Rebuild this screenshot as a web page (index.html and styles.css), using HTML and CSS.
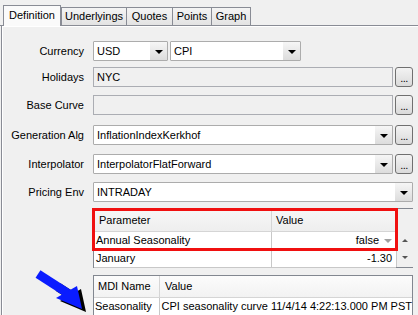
FILE: index.html
```html
<!DOCTYPE html>
<html>
<head>
<meta charset="utf-8">
<link rel="stylesheet" href="styles.css">
</head>
<body>
<div class="tabbar">
  <div class="tab active">Definition</div>
  <div class="tab t-und">Underlyings</div>
  <div class="tab t-quo">Quotes</div>
  <div class="tab t-pts">Points</div>
  <div class="tab t-gra">Graph</div>
</div>
<div class="panel">
  <div class="form">
    <div class="lbl">Currency</div>
    <div class="row">
      <div class="combo w-usd"><span class="val">USD</span><span class="cbtn"><i class="tri"></i></span></div>
      <div class="combo w-cpi"><span class="val">CPI</span><span class="cbtn"><i class="tri"></i></span></div>
    </div>

    <div class="lbl">Holidays</div>
    <div class="row">
      <div class="txt">NYC</div>
      <div class="dots">...</div>
    </div>

    <div class="lbl">Base Curve</div>
    <div class="row">
      <div class="txt"></div>
      <div class="dots">...</div>
    </div>

    <div class="lbl">Generation Alg</div>
    <div class="row">
      <div class="combo grow"><span class="val">InflationIndexKerkhof</span><span class="cbtn"><i class="tri"></i></span></div>
      <div class="dots">...</div>
    </div>

    <div class="lbl">Interpolator</div>
    <div class="row">
      <div class="combo grow"><span class="val">InterpolatorFlatForward</span><span class="cbtn"><i class="tri"></i></span></div>
      <div class="dots">...</div>
    </div>

    <div class="lbl">Pricing Env</div>
    <div class="row">
      <div class="combo grow"><span class="val">INTRADAY</span><span class="cbtn"><i class="tri"></i></span></div>
    </div>

    <div class="ptable">
      <div class="pmain">
        <div class="thead">
          <div class="h1">Parameter</div>
          <div class="h2">Value</div>
        </div>
        <div class="trow">
          <div class="c1">Annual Seasonality</div>
          <div class="c2">false<i class="stri"></i></div>
        </div>
        <div class="trow">
          <div class="c1">January</div>
          <div class="c2 num">-1.30</div>
        </div>
      </div>
      <div class="vscroll">
        <div class="corner"></div>
        <div class="sbtn"><i class="up"></i></div>
        <div class="sbtn"><i class="down"></i></div>
      </div>
      <div class="redbox"></div>
    </div>

    <div class="mtable">
      <div class="mhead">
        <div class="m1">MDI Name</div>
        <div class="m2">Value</div>
      </div>
      <div class="mrow">
        <div class="r1">Seasonality</div>
        <div class="r2">CPI seasonality curve 11/4/14 4:22:13.000 PM PST</div>
      </div>
    </div>
  </div>
</div>
<svg class="arrow" width="62" height="50" viewBox="0 0 62 50">
  <g transform="translate(4,3)" fill="#000">
    <polygon points="26,33 47,21 52,44"/>
    <line x1="24" y1="19" x2="38" y2="28" stroke="#000" stroke-width="9"/>
  </g>
  <line x1="8" y1="9" x2="39" y2="29" stroke="#0a1cff" stroke-width="9"/>
  <polygon points="26,33 47,21 52,44" fill="#0a1cff"/>
</svg>
</body>
</html>
```
FILE: styles.css
```css
* { box-sizing: border-box; }
body {
  margin: 0;
  width: 418px;
  height: 315px;
  overflow: hidden;
  background: #f0f0f0;
  font-family: "Liberation Sans", Arial, sans-serif;
  font-size: 11px;
  color: #000;
  position: relative;
}
.tabbar {
  display: flex;
  align-items: flex-end;
  height: 26px;
  padding-left: 3px;
  border-bottom: 1px solid #898c95;
}
.tab {
  height: 18px;
  line-height: 17px;
  margin-left: -1px;
  border: 1px solid #898c95;
  border-bottom: none;
  background: linear-gradient(#f4f4f4, #e3e3e3);
  white-space: nowrap;
  text-align: center;
}
.t-und { width: 66px; }
.t-quo { width: 47px; }
.t-pts { width: 40px; }
.t-gra { width: 40px; }
.tab.active {
  margin-left: 0;
  width: 58px;
  height: 21px;
  line-height: 18px;
  margin-bottom: -1px;
  background: #fafafa;
  position: relative;
  z-index: 1;
}
.tab.active + .tab { margin-left: 0; }
.panel {
  margin-left: 1px;
  height: 289px;
  border-left: 1px solid #898c95;
  box-shadow: inset 1px 1px 0 #fff;
  padding-top: 15px;
}
.form {
  display: grid;
  grid-template-columns: 84px 320px;
  column-gap: 7px;
  grid-template-rows: 26px 28px 30px 29px 28px 26px 67px auto;
}
.lbl {
  text-align: right;
  line-height: 20px;
  padding-right: 2px;
  white-space: nowrap;
}
.row {
  display: flex;
  gap: 2px;
  height: 20px;
}
.combo {
  display: flex;
  height: 20px;
  background: #fff;
  border: 1px solid #acacac;
  border-radius: 1px;
}
.w-usd { width: 75px; }
.w-cpi { width: 131px; }
.grow { flex: 1; }
.val {
  flex: 1;
  padding-left: 3px;
  line-height: 18px;
  white-space: nowrap;
  overflow: hidden;
}
.cbtn {
  width: 17px;
  display: flex;
  align-items: center;
  justify-content: center;
  background: linear-gradient(#f6f6f6, #dcdcdc);
}
.tri {
  width: 0;
  height: 0;
  border-left: 4px solid transparent;
  border-right: 4px solid transparent;
  border-top: 4px solid #000;
  margin-top: 1px;
}
.txt {
  flex: 1;
  height: 20px;
  background: #f0f0f0;
  border: 1px solid #abadb3;
  padding-left: 3px;
  line-height: 18px;
}
.dots {
  width: 18px;
  height: 20px;
  border: 1px solid #707070;
  border-radius: 3px;
  background: linear-gradient(#f3f3f3, #dadada);
  text-align: center;
  line-height: 21px;
  font-size: 11px;
  letter-spacing: -0.5px;
}
.ptable {
  grid-column: 2;
  position: relative;
  display: flex;
  height: 60px;
  border: 1px solid #828790;
  border-right: none;
}
.pmain {
  width: 303px;
  background: #fff;
}
.thead {
  display: flex;
  height: 23px;
  background: linear-gradient(#f7f7f7, #eeeeee);
  border-bottom: 1px solid #d5d5d5;
}
.h1, .h2 {
  line-height: 22px;
  padding-left: 5px;
}
.h1 { width: 178px; border-right: 1px solid #d5d5d5; }
.h2 { flex: 1; padding-left: 4px; }
.trow {
  display: flex;
  height: 18px;
  border-bottom: 1px solid #c8c8c8;
}
.c1 {
  width: 178px;
  border-right: 1px solid #c8c8c8;
  padding-left: 2px;
  line-height: 17px;
}
.c2 {
  flex: 1;
  display: flex;
  justify-content: flex-end;
  align-items: center;
  padding-right: 4px;
  line-height: 17px;
}
.stri {
  width: 0;
  height: 0;
  border-left: 4px solid transparent;
  border-right: 4px solid transparent;
  border-top: 4px solid #a0a0a0;
  margin-left: 5px;
}
.vscroll {
  width: 17px;
  display: flex;
  flex-direction: column;
  border-left: 1px solid #c8c8c8;
  background: #f0f0f0;
}
.corner { height: 23px; }
.sbtn {
  height: 17px;
  display: flex;
  align-items: center;
  justify-content: center;
}
.up, .down {
  width: 0;
  height: 0;
  border-left: 3px solid transparent;
  border-right: 3px solid transparent;
}
.up { border-bottom: 3px solid #555; }
.down { border-top: 3px solid #555; }
.redbox {
  position: absolute;
  left: -2px;
  top: -1px;
  width: 306px;
  height: 43px;
  border: 3px solid #f01010;
}
.mtable {
  grid-column: 2;
  border: 1px solid #828790;
  border-bottom: none;
  height: 45px;
  background: #fff;
}
.mhead {
  display: flex;
  height: 22px;
  background: linear-gradient(#fcfcfc, #f2f2f2);
  border-bottom: 1px solid #d5d5d5;
}
.m1 {
  width: 66px;
  border-right: 1px solid #d5d5d5;
  padding-left: 4px;
  line-height: 21px;
}
.m2 { padding-left: 5px; line-height: 21px; }
.mrow { display: flex; height: 18px; }
.r1 {
  width: 66px;
  border-right: 1px solid #c8c8c8;
  padding-left: 1px;
  line-height: 17px;
}
.r2 {
  padding-left: 2px;
  line-height: 17px;
  white-space: nowrap;
}
.arrow {
  position: absolute;
  left: 30px;
  top: 265px;
}
```
